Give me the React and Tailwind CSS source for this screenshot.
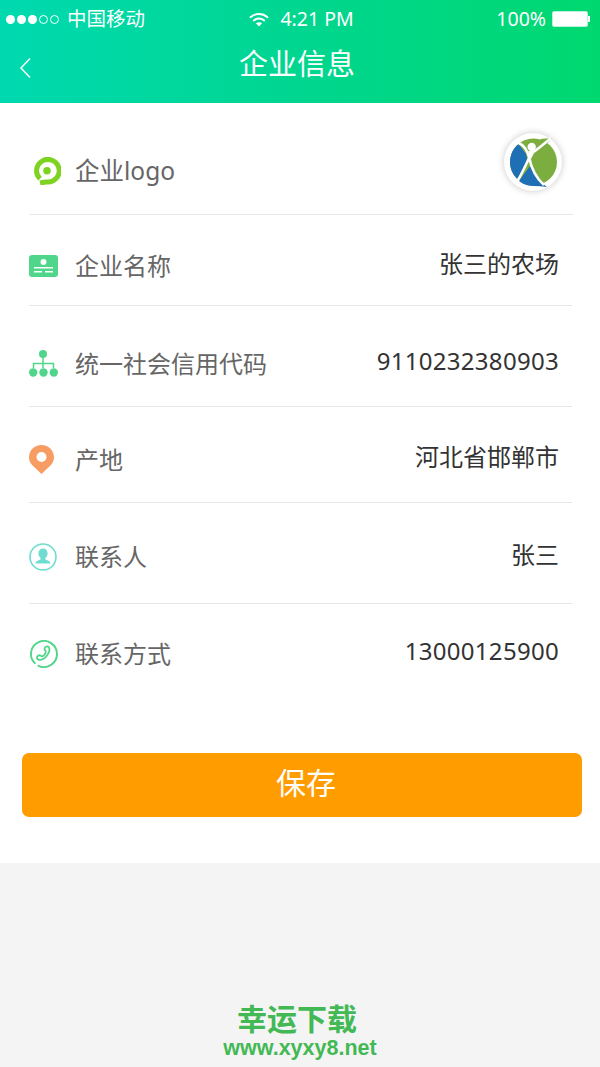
const font = { fontFamily: "'Noto Sans', 'Noto Sans CJK SC', sans-serif" };

function Wifi() {
  return (
    <svg width="20" height="15" viewBox="0 0 20 15" fill="none" stroke="white" strokeLinecap="round">
      <path d="M1.5 5.2C6.4 .9 13.6 .9 18.5 5.2" strokeWidth="2" />
      <path d="M4.8 8.4C7.8 5.9 12.2 5.9 15.2 8.4" strokeWidth="2" />
      <path d="M10 14.5L6.9 11.2C8.7 9.8 11.3 9.8 13.1 11.2Z" fill="white" stroke="none" />
    </svg>
  );
}

function LogoIcon() {
  return (
    <svg width="28" height="28" viewBox="0 0 28 28">
      <path d="M7 21.800A11.300 11.300 0 1 1 14 25C12 25.200 9.500 25.400 7 26" fill="none" stroke="#7ed321" strokeWidth="5" />
      <circle cx="14" cy="13.700" r="3.800" fill="#7ed321" />
    </svg>
  );
}

function CardIcon() {
  return (
    <svg width="29" height="22" viewBox="0 0 29 22">
      <rect width="29" height="22" rx="3" fill="#4fd68a" />
      <circle cx="14.500" cy="7" r="3" fill="white" />
      <rect x="5" y="12" width="19" height="1.500" fill="white" />
      <rect x="5" y="16" width="8" height="1.500" fill="white" />
      <rect x="16" y="16" width="8" height="1.500" fill="white" />
    </svg>
  );
}

function TreeIcon() {
  return (
    <svg width="29" height="27" viewBox="0 0 29 27" fill="#4fd68a">
      <circle cx="14" cy="4" r="4" />
      <circle cx="4.200" cy="22.500" r="4.200" />
      <circle cx="14.500" cy="22.500" r="4.200" />
      <circle cx="24.800" cy="22.500" r="4.200" />
      <path d="M14 7v11M4.500 18v-4.500h20V18" fill="none" stroke="#4fd68a" strokeWidth="1.500" />
    </svg>
  );
}

function PinIcon() {
  return (
    <svg width="25" height="29" viewBox="0 0 25 29">
      <path fillRule="evenodd" fill="#f79d63" d="M12.500 0C19.400 0 25 5.400 25 12.200c0 3.300-1.200 5.800-3.300 8L12.500 29l-9.200-8.800C1.200 18 0 15.500 0 12.200 0 5.400 5.600 0 12.500 0ZM12.500 7a5 5 0 1 0 0 10 5 5 0 0 0 0-10Z" />
    </svg>
  );
}

function PersonIcon() {
  return (
    <svg width="28" height="28" viewBox="0 0 28 28">
      <circle cx="14" cy="14" r="13" fill="none" stroke="#6fdccf" strokeWidth="1.600" />
      <path fill="#6fdccf" d="M14 5.500c2.900 0 4.600 2.100 4.600 4.800 0 2.100-.9 3.700-2.200 4.700v1.400c1.800.8 4.900 1.400 5.100 4.100H6.500c.2-2.700 3.300-3.300 5.100-4.100V15c-1.300-1-2.200-2.600-2.200-4.700C9.400 7.600 11.100 5.500 14 5.500Z" />
    </svg>
  );
}

function PhoneIcon() {
  return (
    <svg className="ml-[1px]" width="28" height="28" viewBox="0 0 28 28" fill="none" stroke="#4fd68a">
      <path d="M4.810 23.190A13 13 0 1 1 8.510 25.780" strokeWidth="1.900" strokeLinecap="round" />
      <path d="M17.500 6.500c-1.200-.3-2.600 1-3 2.200-.3 1 .8 1.800 1.300 2.600.3.700-.2 1.700-1 3-.9 1.400-2 2.200-2.900 2-1-.2-1.600-1.300-2.600-1.200-1.200.2-2.500 1.700-2.300 2.900.2 1.300 2.200 2.300 4.300 1.700 2.800-.8 5.600-3.400 7.200-6.500 1.500-3 1.300-6.200-1-6.700Z" strokeWidth="1.800" />
    </svg>
  );
}

function CompanyLogo() {
  return (
    <div className="flex h-[58px] w-[58px] items-center justify-center rounded-full bg-white shadow-[0_0_7px_rgba(0,0,0,0.22)]">
      <svg width="47" height="50" viewBox="0 0 47 50" fill="none">
        <circle cx="23.500" cy="25" r="23.500" fill="#7cae3f" />
        <path d="M30 2L42 1 36 8Z" fill="#7cae3f" />
        <path fill="#1f6fb5" d="M8.500 7C3.300 11.300 0 17.500 0 25c0 6.700 2.800 12.700 7.300 17L18 26 16 17Z" />
        <path fill="#1f6fb5" d="M20 29 9 44c4 3.200 9 5 14.500 5 4.500 0 9 .2 13.500 1C29 44 24 37 20 29Z" />
        <path d="M41 1C34 7 28 12 22 16 18 22 14 33 8 43" stroke="white" strokeWidth="2.600" />
        <path d="M8.500 6C14 8 17 13 19 20 21 30 26 41 34 48" stroke="white" strokeWidth="2.600" />
        <circle cx="21.700" cy="10" r="4.200" fill="white" />
        <path d="M18 14 25 14 21 22Z" fill="white" />
      </svg>
    </div>
  );
}

function Row({ icon, label, value, height, offset, valueClass = "mb-[5px]", border = true }) {
  return (
    <div className={`ml-[29px] mr-[28px] flex items-center justify-between ${height} ${offset} ${border ? "border-b border-[#e6e6e6]" : ""}`}>
      <div className="flex items-center">
        <div className="flex w-[46px] justify-start">{icon}</div>
        <span className="text-[24px] leading-[32px] text-[#666666]">{label}</span>
      </div>
      <span className={`mr-[13px] text-[24px] leading-[32px] text-[#333333] ${valueClass}`}>{value}</span>
    </div>
  );
}

export default function App() {
  return (
    <div className="flex h-[1067px] w-[600px] flex-col overflow-hidden bg-[#f4f4f4]" style={font}>
      {/* Header */}
      <div className="h-[103px] bg-gradient-to-r from-[#00d9b0] via-[#00d68f] to-[#00d86f] text-white">
        <div className="flex h-[38px] items-center justify-between pl-[6px] pr-[10px] text-[19.500px]">
          <div className="flex w-[200px] items-center gap-[8px]">
            <div className="flex gap-[2px]">
              {[0, 1, 2].map(i => <span key={i} className="h-[9px] w-[9px] rounded-full bg-white" />)}
              {[0, 1].map(i => <span key={i} className="h-[9px] w-[9px] rounded-full border border-white" />)}
            </div>
            <span>中国移动</span>
          </div>
          <div className="ml-[7px] flex items-center gap-[11px]">
            <Wifi />
            <span>4:21 PM</span>
          </div>
          <div className="flex w-[200px] items-center justify-end gap-[6px]">
            <span>100%</span>
            <div className="flex items-center">
              <div className="h-[16px] w-[36px] rounded-[2px] border border-[#b8f2dc] bg-white" />
              <div className="h-[6px] w-[2px] bg-white" />
            </div>
          </div>
        </div>
        <div className="relative flex h-[50px] items-center justify-center pr-[6px] pt-[1px]">
          <svg className="absolute left-[18px] top-[19px]" width="14" height="22" viewBox="0 0 14 22" fill="none" stroke="white" strokeWidth="1.500">
            <path d="M12 1.500L3 11l9 9.500" />
          </svg>
          <span className="text-[29px] leading-[36px]">企业信息</span>
        </div>
      </div>

      {/* Form */}
      <div className="h-[760px] bg-white">
        <div className="ml-[30px] mr-[27px] flex h-[112px] items-center justify-between border-b border-[#e6e6e6]">
          <div className="mt-[24px] flex items-center">
            <div className="ml-[3px] w-[42px]"><LogoIcon /></div>
            <span className="text-[24.500px] leading-[32px] text-[#666666]">企业logo</span>
          </div>
          <div className="mt-[7px] mr-[11px]"><CompanyLogo /></div>
        </div>
        <Row icon={<CardIcon />} label="企业名称" value="张三的农场" height="h-[91px]" offset="pt-[12px]" />
        <Row icon={<TreeIcon />} label="统一社会信用代码" value="9110232380903" height="h-[101px]" offset="pt-[15px]" valueClass="mb-[5px] tracking-[0.3px]" />
        <Row icon={<PinIcon />} label="产地" value="河北省邯郸市" height="h-[96px]" offset="pt-[10px]" />
        <Row icon={<PersonIcon />} label="联系人" value="张三" height="h-[101px]" offset="pt-[8px]" />
        <Row icon={<PhoneIcon />} label="联系方式" value="13000125900" height="h-[100px]" offset="pt-0" valueClass="mb-[7px] tracking-[0.3px]" border={false} />

        <div className="ml-[22px] mr-[18px] mt-[49px]">
          <button className="h-[64px] w-full rounded-[7px] bg-[#ff9c00] pb-[5px] pl-[8px] text-[30px] text-white">保存</button>
        </div>
      </div>

      {/* Watermark */}
      <div className="mt-[136px] flex flex-col items-center">
        <span className="mr-[6px] text-[30px] font-bold leading-[40px] text-[#43b955]">幸运下载</span>
        <span className="-mt-[3px] text-[21.500px] font-bold leading-[24px] text-[#43b955]" style={{ fontFamily: "'Liberation Sans', sans-serif" }}>www.xyxy8.net</span>
      </div>
    </div>
  );
}
